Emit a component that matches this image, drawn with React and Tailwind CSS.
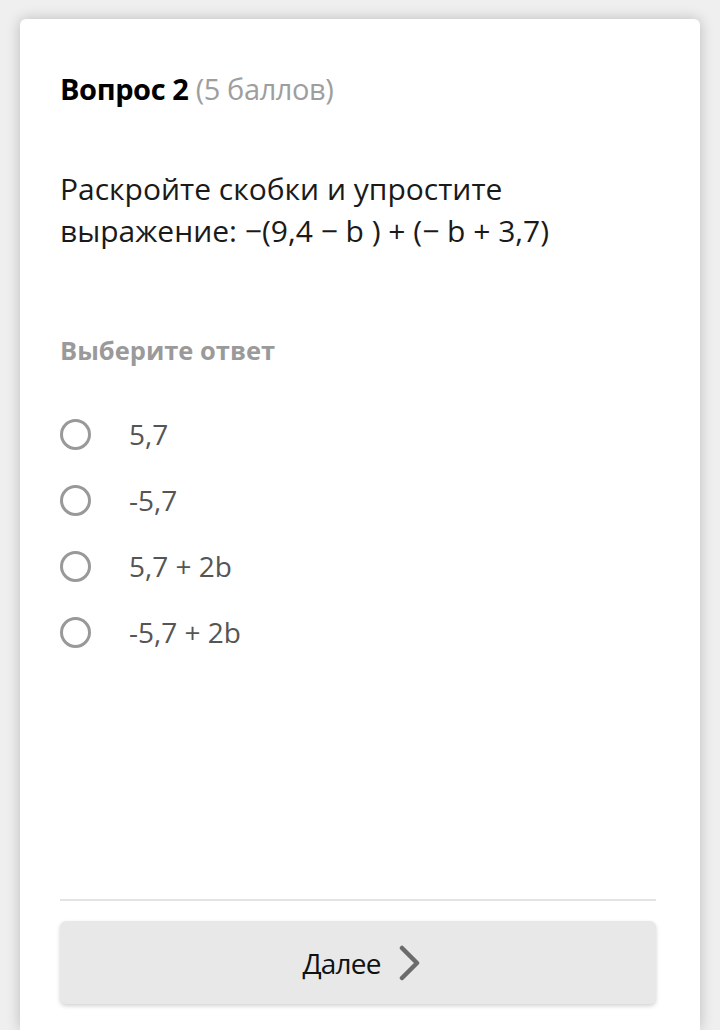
import React, { useState } from 'react';

const options = ['5,7', '-5,7', '5,7 + 2b', '-5,7 + 2b'];

const App = () => {
  const [selected, setSelected] = useState(null);

  return (
    <div
      className="min-h-[1030px] bg-[#efefef] px-5 pt-[19px]"
      style={{ fontFamily: '"Open Sans", "Noto Sans", sans-serif' }}
    >
      <div className="h-[1011px] rounded-t-md bg-white pl-10 pr-11 shadow-[0_0_14px_rgba(0,0,0,0.22)] flex flex-col">
        {/* Header */}
        <div className="pt-[51px] text-[29px] leading-[38px] tracking-[-0.4px]">
          <span className="font-bold text-black">Вопрос 2</span>{' '}
          <span className="text-[#9e9e9e]">(5 баллов)</span>
        </div>

        {/* Question */}
        <p className="mt-[60px] text-[30px] leading-[42px] text-[#1a1a1a]">
          Раскройте скобки и упростите
          <br />
          выражение: −(9,4 − b ) + (− b + 3,7)
        </p>

        <div className="mt-[82px] text-[25.5px] leading-[32px] font-bold text-[#9a9a9a]">
          Выберите ответ
        </div>

        {/* Options */}
        <div className="mt-[50px] flex flex-col gap-[30px]">
          {options.map((opt, i) => (
            <label
              key={i}
              className="flex items-center h-9 cursor-pointer"
              onClick={() => setSelected(i)}
            >
              <span className="w-[31px] h-[31px] rounded-full border-[3px] border-[#999999] flex items-center justify-center shrink-0">
                {selected === i && <span className="w-[15px] h-[15px] rounded-full bg-[#999999]" />}
              </span>
              <span className="ml-[38px] text-[28px] text-[#555555]">{opt}</span>
            </label>
          ))}
        </div>

        <div className="mt-auto border-t-2 border-[#e3e3e3]" />

        {/* Next button */}
        <button className="mt-5 mb-[26px] h-[83px] rounded-md bg-[#e8e8e8] pl-2 shadow-[0_2px_4px_rgba(0,0,0,0.18)] flex items-center justify-center gap-[17px]">
          <span className="text-[28px] tracking-[-0.8px] text-[#111111]">Далее</span>
          <svg width="24" height="36" viewBox="0 0 24 36" fill="none">
            <path d="M4 3 L19 18 L4 33" stroke="#6b6b6b" strokeWidth="4.5" strokeLinecap="round" strokeLinejoin="round" />
          </svg>
        </button>
      </div>
    </div>
  );
};

export default App;
